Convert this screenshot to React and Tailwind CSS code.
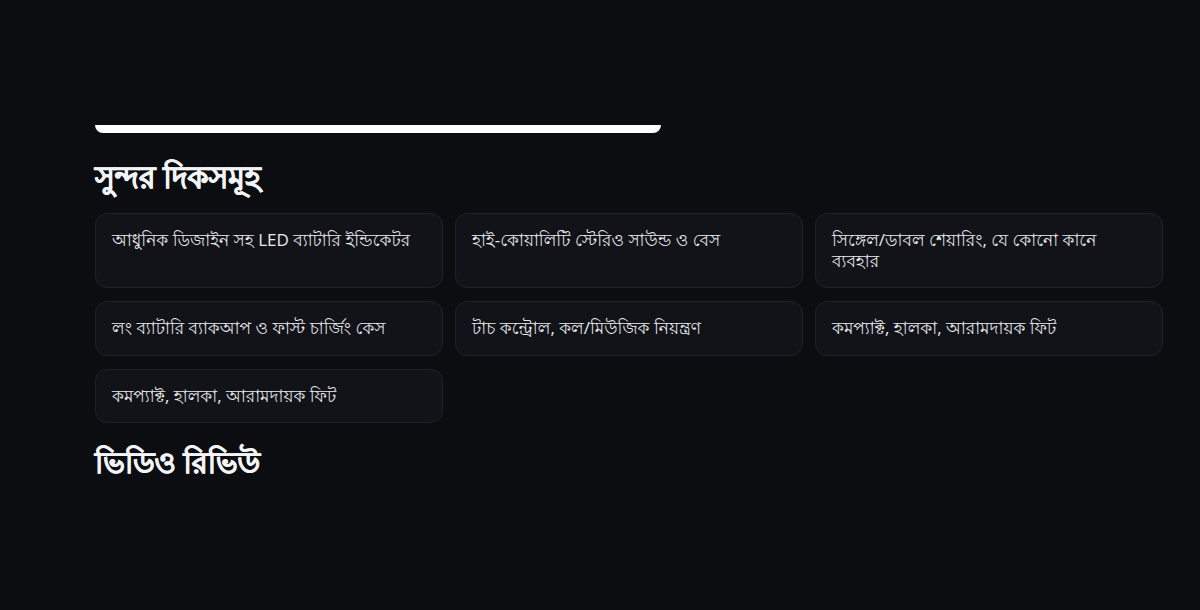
const features = [
    'আধুনিক ডিজাইন সহ LED ব্যাটারি ইন্ডিকেটর',
    'হাই-কোয়ালিটি স্টেরিও সাউন্ড ও বেস',
    'সিঙ্গেল/ডাবল শেয়ারিং, যে কোনো কানে ব্যবহার',
    'লং ব্যাটারি ব্যাকআপ ও ফাস্ট চার্জিং কেস',
    'টাচ কন্ট্রোল, কল/মিউজিক নিয়ন্ত্রণ',
    'কমপ্যাক্ট, হালকা, আরামদায়ক ফিট',
    'কমপ্যাক্ট, হালকা, আরামদায়ক ফিট',
];

const App = () => (
    <div className="min-h-screen w-full bg-[#0b0d11] font-['Open_Sans','Lohit_Bengali',sans-serif] text-white">
        <div className="w-[1068px] ml-[95px] pt-[125px]">
            <div className="w-[566px] h-[8px] bg-white rounded-b-[14px]"></div>

            <h2 className="mt-[26px] text-[30px] leading-[36px] font-bold text-[#f3f4f6] [-webkit-text-stroke:0.6px_#f3f4f6]">সুন্দর দিকসমূহ</h2>

            <div className="mt-[18px] grid grid-cols-3 gap-x-3 gap-y-[13px]">
                {features.map((f, i) => (
                    <div
                        key={i}
                        className="bg-[#111318] border border-[#1f2229] rounded-xl px-4 py-4 text-[17px] leading-[20.5px] text-[#e8e9ec]"
                    >
                        {f}
                    </div>
                ))}
            </div>

            <h2 className="mt-[21px] text-[29px] leading-[36px] font-bold text-[#f3f4f6] [-webkit-text-stroke:0.6px_#f3f4f6]">ভিডিও রিভিউ</h2>
        </div>
    </div>
);

export default App;
